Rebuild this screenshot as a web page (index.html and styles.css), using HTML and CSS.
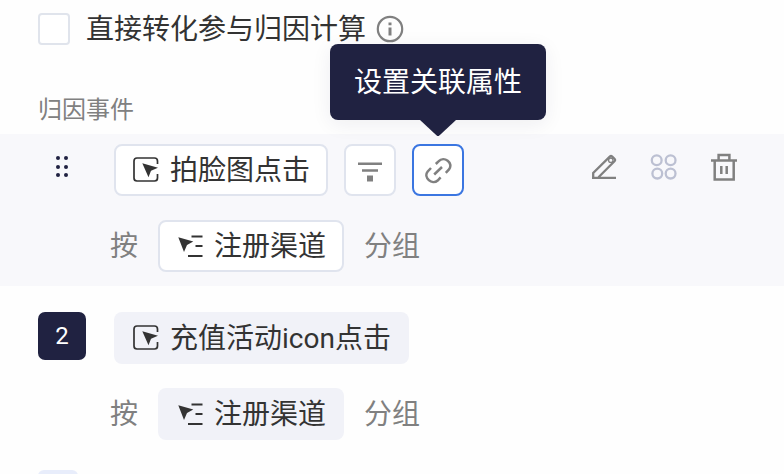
FILE: index.html
```html
<!DOCTYPE html>
<html lang="zh-CN">
<head>
<meta charset="utf-8">
<title>归因事件</title>
<link rel="stylesheet" href="styles.css">
</head>
<body>
<svg class="defs" aria-hidden="true">
  <symbol id="event" viewBox="0 0 28 28">
    <path d="M25.500 8V5Q25.500 2 22.500 2H5Q2 2 2 5V22Q2 25 5 25H22.500Q25.500 25 25.500 22V18" fill="none" stroke="currentColor" stroke-width="1.700"/>
    <path d="M10.300 7.300L26 11.700L19 14.700L16.500 21.300Z" fill="currentColor"/>
  </symbol>
  <symbol id="property" viewBox="0 0 28 28">
    <path d="M2.300 5.300L17.300 9.500L11 13L8 20Z" fill="currentColor"/>
    <path d="M15.500 4.500H26.500M19.500 14H26.500M12 24H26.500" fill="none" stroke="currentColor" stroke-width="1.800"/>
  </symbol>
</svg>
<main class="panel">
  <label class="option">
    <span class="checkbox"></span>
    <span class="text">直接转化参与归因计算</span>
    <svg class="info" viewBox="0 0 28 28"><circle cx="14" cy="14" r="12.200" fill="none" stroke="currentColor" stroke-width="2.200"/><path d="M12.500 7.500h3v2.700h-3zM12.500 12.500h3v8h-3z" fill="currentColor"/></svg>
  </label>
  <h2 class="heading">归因事件</h2>

  <section class="event active">
    <div class="lead"><span class="drag"><i></i><i></i><i></i><i></i><i></i><i></i></span></div>
    <div class="content">
      <div class="line">
        <span class="chip"><svg class="icon"><use href="#event"/></svg><span class="text">拍脸图点击</span></span>
        <button class="square"><svg class="icon" viewBox="0 0 28 28"><path d="M2 7.700H26M6 14.500H22" fill="none" stroke="currentColor" stroke-width="2.600"/><path d="M11 19.500h6v6h-6z" fill="currentColor"/></svg></button>
        <button class="square selected">
          <svg class="icon" viewBox="0 0 28 28"><path d="M11.800 8L14.500 5.300C20-.5 30 7 25 13.400L21.800 16.800M7 12L3.700 15.500C-1 21.500 8 29.500 13.700 24.500L16.600 21.400M10.200 18.500L18 11" fill="none" stroke="currentColor" stroke-width="2.500"/></svg>
          <span class="tooltip"><span class="text">设置关联属性</span></span>
        </button>
      </div>
      <div class="line group"><span class="text">按</span><span class="chip"><svg class="icon"><use href="#property"/></svg><span class="text">注册渠道</span></span><span class="text">分组</span></div>
    </div>
    <div class="actions">
      <svg class="icon" viewBox="0 0 28 28"><path d="M3.200 24.500V20L20 3.400Q21 2.600 22 3.400L24.700 6Q25.600 7 24.700 8L8.500 24.200M2 24.800H26" fill="none" stroke="currentColor" stroke-width="2.300"/><circle cx="20.800" cy="7.200" r="2.200" fill="none" stroke="currentColor" stroke-width="1.300"/></svg>
      <svg class="icon pale" viewBox="0 0 28 28"><g fill="none" stroke="currentColor" stroke-width="2.300"><circle cx="6.700" cy="7.200" r="4.900"/><circle cx="20.600" cy="7.200" r="4.900"/><circle cx="7.300" cy="20.600" r="4.900"/><circle cx="20.600" cy="20.600" r="4.900"/></g></svg>
      <svg class="icon" viewBox="0 0 28 28"><path d="M1 7.600H27M8.600 7V2H19.400V7M4.700 8V26.400H23.700V8M11.300 13V21M16.700 13V21" fill="none" stroke="currentColor" stroke-width="2.500"/></svg>
    </div>
  </section>

  <section class="event">
    <div class="lead"><span class="number">2</span></div>
    <div class="content">
      <div class="line"><span class="chip"><svg class="icon"><use href="#event"/></svg><span class="text">充值活动icon点击</span></span></div>
      <div class="line group"><span class="text">按</span><span class="chip"><svg class="icon"><use href="#property"/></svg><span class="text">注册渠道</span></span><span class="text">分组</span></div>
    </div>
  </section>
  <div class="next"></div>
</main>
</body>
</html>
```
FILE: styles.css
```css
* { box-sizing: border-box; }
body {
  margin: 0;
  overflow: hidden;
  background: #fefefe;
  color: #333;
  font: 28px/40px Roboto, "Noto Sans CJK SC", sans-serif;
}
.defs { position: absolute; width: 0; height: 0; }
.panel { width: 784px; height: 474px; overflow: hidden; }
.text { display: block; padding-top: 2px; }
.option { display: flex; align-items: center; height: 40px; margin-top: 9px; padding-left: 38px; }
.checkbox { width: 32px; height: 32px; margin-right: 16px; border: 2px solid #e0e4ec; border-radius: 4px; background: #fff; }
.info { width: 28px; height: 28px; margin-left: 10px; color: #808080; }
.heading { height: 36px; margin: 43px 0 6px 38px; color: #808080; font-size: 24px; font-weight: 400; line-height: 36px; }
.event { display: flex; height: 152px; padding: 10px 46px 14px 38px; }
.event.active { background: #f8f8fb; }
.event + .event { margin-top: 16px; }
.lead { width: 76px; }
.drag { display: grid; grid-template-columns: 4px 4px; gap: 4.700px 4px; width: 12px; margin: 12px 0 0 18px; }
.drag i { height: 4px; border-radius: 50%; background: #202241; }
.number { display: block; width: 48px; height: 48px; border-radius: 7px; background: #202241; color: #fff; font-size: 24px; line-height: 48px; text-align: center; }
.content { display: flex; flex: 1; flex-direction: column; gap: 24px; }
.line { display: flex; align-items: center; gap: 16px; height: 52px; white-space: nowrap; }
.group { gap: 20px; margin-left: -4px; color: #808080; }
.chip { display: flex; align-items: center; gap: 10px; height: 52px; padding: 0 18px; border-radius: 8px; background: #f1f2f8; color: #333; }
.active .chip { padding: 0 16px; border: 2px solid #e0e4ee; background: #fff; }
.icon { flex: none; width: 28px; height: 28px; }
.square { position: relative; display: flex; align-items: center; justify-content: center; width: 52px; height: 52px; padding: 0; border: 2px solid #e0e4ee; border-radius: 8px; background: #fff; color: #808080; font: inherit; }
.selected { border-color: #3b76e1; }
.tooltip { position: absolute; bottom: 74px; left: 50%; display: flex; align-items: center; justify-content: center; width: 216px; height: 76px; border-radius: 8px; background: #202241; box-shadow: 0 4px 20px rgba(32, 34, 65, .07); color: #fff; transform: translateX(-50%); }
.tooltip::after { position: absolute; top: 100%; left: 50%; width: 36px; height: 16px; background: #202241; clip-path: polygon(0 0, 100% 0, 56% 92%, 52% 100%, 48% 100%, 44% 92%); content: ""; transform: translateX(-50%); }
.actions { display: flex; gap: 32px; margin-top: 9px; color: #808080; }
.pale { color: #bcc0d2; }
.next { width: 40px; height: 20px; margin: 16px 0 0 38px; border-radius: 6px; background: #e8edfb; }
```
